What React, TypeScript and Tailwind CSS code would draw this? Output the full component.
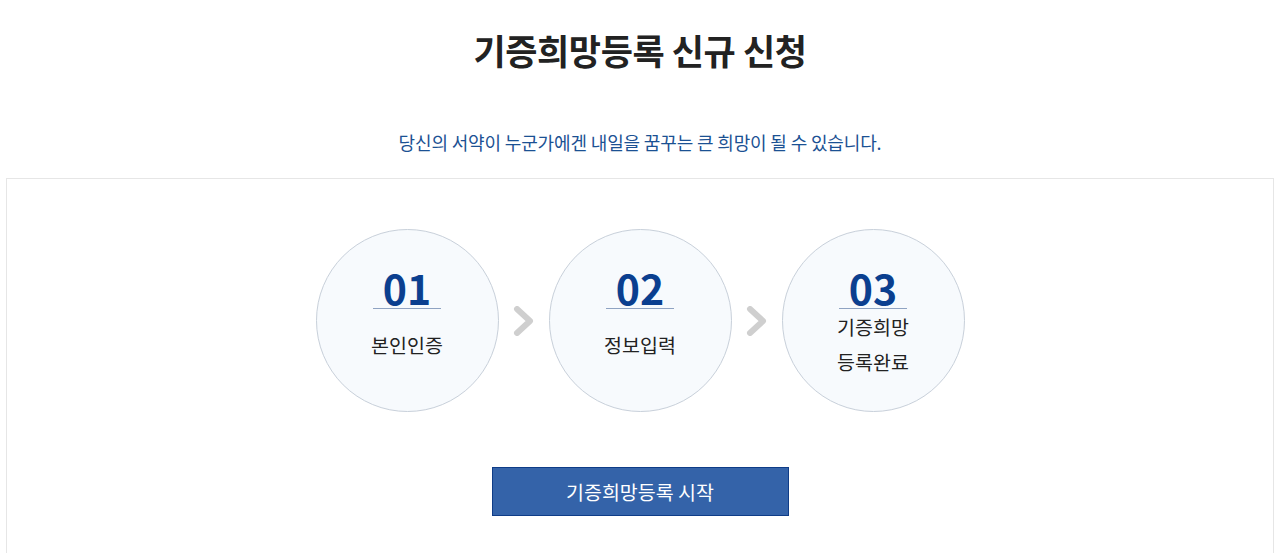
import React from 'react';

const steps = [
  { no: '01', label: ['본인인증'] },
  { no: '02', label: ['정보입력'] },
  { no: '03', label: ['기증희망', '등록완료'] },
];

const Chevron: React.FC = () => (
  <svg width="50" height="30" viewBox="0 0 50 30" className="shrink-0">
    <path d="M18 3 L31 15 L18 27" fill="none" stroke="#cfcfcf" strokeWidth="6" strokeLinecap="round" strokeLinejoin="round" />
  </svg>
);

const StepCircle: React.FC<{ no: string; label: string[] }> = ({ no, label }) => (
  <div className="w-[183px] h-[183px] rounded-full border border-[#c8d0da] bg-[#f7fafd] flex flex-col items-center pt-[36px] shrink-0">
    <div className="w-[68px] border-b border-[#8fa3c2] text-center text-[41px] leading-[42px] font-bold text-[#0b3f8f]">
      {no}
    </div>
    <div className="h-[70px] flex flex-col items-center justify-center text-[19.5px] leading-[35px] text-[#222]">
      {label.map((l) => (
        <span key={l}>{l}</span>
      ))}
    </div>
  </div>
);

export default function App() {
  return (
    <div className="bg-white min-h-[553px] font-['Noto_Sans_CJK_KR','Noto_Sans',sans-serif]">
      <h1 className="pt-[28px] text-center text-[35px] leading-[44px] font-bold tracking-[-0.4px] text-[#222]">
        기증희망등록 신규 신청
      </h1>
      <p className="mt-[57px] text-center text-[18px] leading-[26px] tracking-[-0.15px] text-[#1b5193]">
        당신의 서약이 누군가에겐 내일을 꿈꾸는 큰 희망이 될 수 있습니다.
      </p>
      <div className="mx-[6px] mt-[23px] border border-[#e6e6e6] border-b-0 pt-[50px] pb-[40px]">
        <div className="flex items-center justify-center">
          <StepCircle no={steps[0].no} label={steps[0].label} />
          <Chevron />
          <StepCircle no={steps[1].no} label={steps[1].label} />
          <Chevron />
          <StepCircle no={steps[2].no} label={steps[2].label} />
        </div>
        <div className="mt-[55px] flex justify-center">
          <button className="w-[297px] h-[49px] bg-[#3463a9] border border-[#0f3c87] text-white text-[19.5px]">
            기증희망등록 시작
          </button>
        </div>
      </div>
    </div>
  );
}
